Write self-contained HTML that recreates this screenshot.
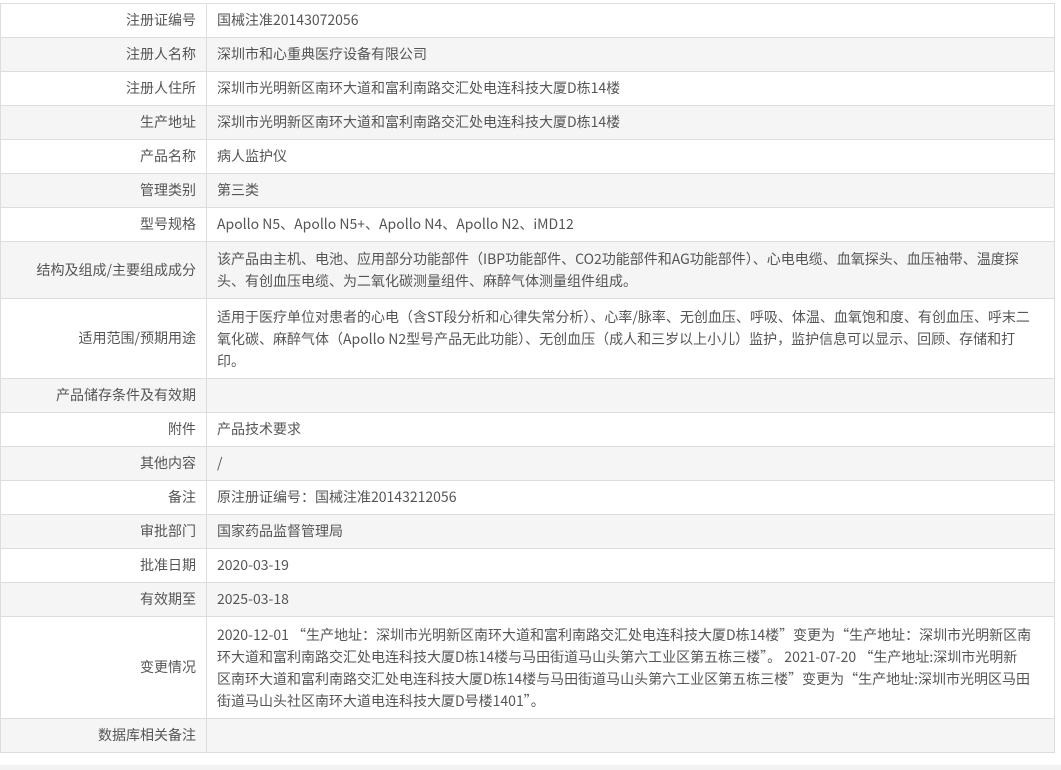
<!DOCTYPE html>
<html><head><meta charset="utf-8"><style>
body{margin:0;background:#fff;width:1061px;height:770px;overflow:hidden;position:relative;font-family:"Noto Sans CJK SC","Liberation Sans",sans-serif;}
table{position:absolute;left:0;top:3px;width:1055px;border-collapse:collapse;font-size:14px;color:#555;}
td{border:1px solid #ddd;padding:5px 10px 6px;line-height:22px;vertical-align:middle;}
td.l{width:185px;text-align:right;}
td.m{line-height:22px;padding:6px 10px;white-space:nowrap;}
td.m2{padding:7px 10px 6px;}
tr:nth-child(even) td{background:#f5f5f5;}
.foot{position:absolute;left:0;right:0;top:765px;height:5px;background:#f2f2f2;}
</style></head><body>
<table>
<tr><td class="l">注册证编号</td><td>国械注准20143072056</td></tr>
<tr><td class="l">注册人名称</td><td>深圳市和心重典医疗设备有限公司</td></tr>
<tr><td class="l">注册人住所</td><td>深圳市光明新区南环大道和富利南路交汇处电连科技大厦D栋14楼</td></tr>
<tr><td class="l">生产地址</td><td>深圳市光明新区南环大道和富利南路交汇处电连科技大厦D栋14楼</td></tr>
<tr><td class="l">产品名称</td><td>病人监护仪</td></tr>
<tr><td class="l">管理类别</td><td>第三类</td></tr>
<tr><td class="l">型号规格</td><td>Apollo N5、Apollo N5+、Apollo N4、Apollo N2、iMD12</td></tr>
<tr><td class="l">结构及组成/主要组成成分</td><td class="m">该产品由主机、电池、应用部分功能部件（IBP功能部件、CO2功能部件和AG功能部件）、心电电缆、血氧探头、血压袖带、温度探<br>头、有创血压电缆、为二氧化碳测量组件、麻醉气体测量组件组成。</td></tr>
<tr><td class="l">适用范围/预期用途</td><td class="m m2">适用于医疗单位对患者的心电（含ST段分析和心律失常分析）、心率/脉率、无创血压、呼吸、体温、血氧饱和度、有创血压、呼末二<br>氧化碳、麻醉气体（Apollo N2型号产品无此功能）、无创血压（成人和三岁以上小儿）监护，监护信息可以显示、回顾、存储和打<br>印。</td></tr>
<tr><td class="l">产品储存条件及有效期</td><td></td></tr>
<tr><td class="l">附件</td><td>产品技术要求</td></tr>
<tr><td class="l">其他内容</td><td>/</td></tr>
<tr><td class="l">备注</td><td>原注册证编号：国械注准20143212056</td></tr>
<tr><td class="l">审批部门</td><td>国家药品监督管理局</td></tr>
<tr><td class="l">批准日期</td><td>2020-03-19</td></tr>
<tr><td class="l">有效期至</td><td>2025-03-18</td></tr>
<tr><td class="l">变更情况</td><td class="m m2">2020-12-01 “生产地址：深圳市光明新区南环大道和富利南路交汇处电连科技大厦D栋14楼”变更为“生产地址：深圳市光明新区南<br>环大道和富利南路交汇处电连科技大厦D栋14楼与马田街道马山头第六工业区第五栋三楼”。 2021-07-20 “生产地址:深圳市光明新<br>区南环大道和富利南路交汇处电连科技大厦D栋14楼与马田街道马山头第六工业区第五栋三楼”变更为“生产地址:深圳市光明区马田<br>街道马山头社区南环大道电连科技大厦D号楼1401”。</td></tr>
<tr><td class="l">数据库相关备注</td><td></td></tr>
</table>
<div class="foot"></div>
</body></html>
